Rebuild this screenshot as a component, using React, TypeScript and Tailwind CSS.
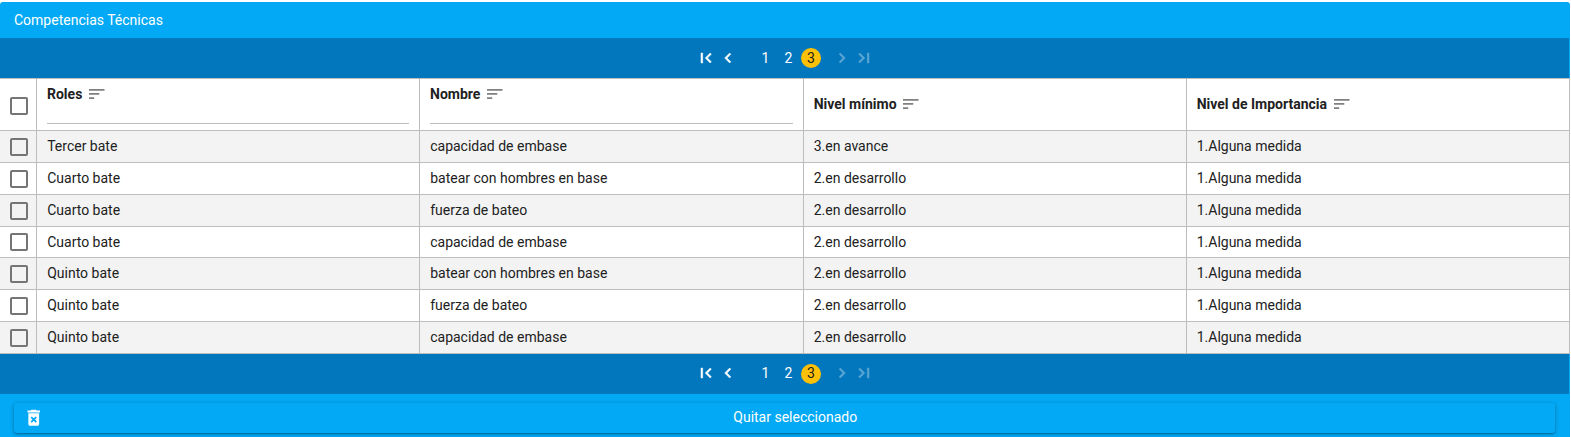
import React from "react";

const rows = [
  ["Tercer bate", "capacidad de embase", "3.en avance"],
  ["Cuarto bate", "batear con hombres en base", "2.en desarrollo"],
  ["Cuarto bate", "fuerza de bateo", "2.en desarrollo"],
  ["Cuarto bate", "capacidad de embase", "2.en desarrollo"],
  ["Quinto bate", "batear con hombres en base", "2.en desarrollo"],
  ["Quinto bate", "fuerza de bateo", "2.en desarrollo"],
  ["Quinto bate", "capacidad de embase", "2.en desarrollo"],
];

const grid = "grid grid-cols-[37px_383px_384px_383px_383px]";
const border = "border-r border-b border-[#bdbdbd]";

function Checkbox() {
  return <span className="block h-[18px] w-[18px] rounded-[2px] border-2 border-[#757575]" />;
}

function SortIcon() {
  return (
    <svg className="ml-[6.6px] h-[10px] w-4 shrink-0" viewBox="0 0 16 10" fill="#808080">
      <path d="M0 0h15.5v1.7H0zM0 4.1h10.3v1.7H0zM0 8.2h5.2v1.7H0z" />
    </svg>
  );
}

function Icon({ d, className }: { d: string; className: string }) {
  return (
    <svg className={`h-5 w-5 shrink-0 ${className}`} viewBox="0 0 24 24" fill="currentColor" stroke="currentColor" strokeWidth="0.6">
      <path d={d} />
    </svg>
  );
}

function Paginator({ bottom = false }: { bottom?: boolean }) {
  const lift = bottom ? "pb-[2px]" : "";
  return (
    <div className="mr-px flex h-10 items-center bg-[#0277bd] pl-[696.4px] text-white">
      <div className={`flex items-center ${lift}`}>
        <Icon className="" d="M18.41 16.59L13.82 12l4.59-4.59L17 6l-6 6 6 6zM6 6h2v12H6z" />
        <Icon className="ml-[2px]" d="M15.41 7.41L14 6l-6 6 6 6 1.41-1.41L10.83 12z" />
        <span className="ml-[15.5px] w-[23px] text-center">1</span>
        <span className="w-[23px] text-center">2</span>
      </div>
      <span className={`ml-[1.1px] flex h-5 w-5 items-center justify-center rounded-full bg-[#ffc107] text-[#212121] ${lift}`}>3</span>
      <div className={`flex items-center opacity-35 ${lift}`}>
        <Icon className="ml-[11px]" d="M10 6L8.59 7.41 13.17 12l-4.58 4.59L10 18l6-6z" />
        <Icon className="ml-[2px]" d="M5.59 7.41L10.18 12l-4.59 4.59L7 18l6-6-6-6zM16 6h2v12h-2z" />
      </div>
    </div>
  );
}

export default function App() {
  return (
    <div className="h-[437px] w-[1571px] overflow-hidden bg-white pt-[2px] font-['Roboto',sans-serif] text-[14px] leading-[18px] text-[#212121]">
      <div className="h-[435px] w-[1570px] rounded-t-[3px] bg-[#03a9f4]">
        <header className="flex h-9 items-center pl-[14px] text-white">Competencias Técnicas</header>
        <Paginator />
        <div className="border-t border-[#bdbdbd] bg-white">
          <div className={`${grid} h-[52px] font-bold`}>
            <div className={`${border} pt-[18px] pl-[10px]`}><Checkbox /></div>
            {["Roles", "Nombre"].map((t) => (
              <div key={t} className={`flex flex-col justify-between px-[10px] py-[6px] ${border}`}>
                <div className="flex items-center">{t}<SortIcon /></div>
                <div className="h-px bg-[#bdbdbd]" />
              </div>
            ))}
            {["Nivel mínimo", "Nivel de Importancia"].map((t) => (
              <div key={t} className={`flex items-start pt-4 pl-[9.7px] ${border}`}>
                <div className="flex items-center">{t}<SortIcon /></div>
              </div>
            ))}
          </div>
          {rows.map((r, i) => (
            <div key={i} className={`${grid} ${i === 3 ? "h-[31px]" : "h-8"} ${i % 2 === 0 ? "bg-[#f3f3f3]" : "bg-white"}`}>
              <div className={`${border} pl-[10px] ${i === 3 ? "pt-[6px]" : "pt-[7px]"}`}><Checkbox /></div>
              {[...r, "1.Alguna medida"].map((t, j) => (
                <div key={j} className={`${border} pt-[6px] ${j > 1 ? "pl-[9.7px]" : "pl-[10.2px]"}`}>{t}</div>
              ))}
            </div>
          ))}
        </div>
        <Paginator bottom />
        <div className="px-[14px] pt-[9px]">
          <button className="flex h-[30px] w-[1541px] items-center rounded-[3px] text-white shadow-[0_1px_4px_rgba(0,0,0,0.3),0_1px_1px_rgba(0,0,0,0.16)]">
            <svg className="ml-[9px] h-[21.5px] w-[21.5px] shrink-0" viewBox="0 0 24 24" fill="currentColor">
              <path d="M6 19c0 1.1.9 2 2 2h8c1.1 0 2-.9 2-2V7H6v12zm2.46-7.12l1.41-1.41L12 12.59l2.12-2.12 1.41 1.41L13.41 14l2.12 2.12-1.41 1.41L12 15.41l-2.12 2.12-1.41-1.41L10.59 14zM15.5 4l-1-1h-5l-1 1H5v2h14V4z" />
            </svg>
            <span className="flex-1 pr-[9px] pb-[2px] text-center">Quitar seleccionado</span>
          </button>
        </div>
      </div>
    </div>
  );
}
